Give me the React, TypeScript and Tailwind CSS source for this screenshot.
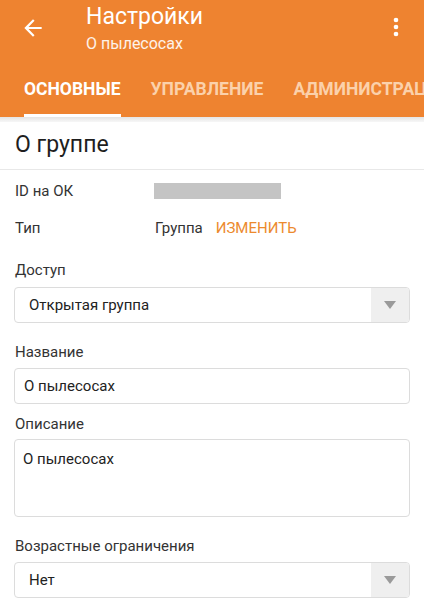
const tabs = ['Основные', 'Управление', 'Администрация'];

function Caret() {
    return (
        <svg width="12" height="8" viewBox="0 0 12 8" className="text-[#9a9a9a]">
            <path d="M0 0h12L6 8z" fill="currentColor" />
        </svg>
    );
}

function Select({ value }: { value: string }) {
    return (
        <div className="flex h-[36px] mx-[14px] rounded-[4px] border border-[#dcdcdc] bg-white overflow-hidden">
            <div className="flex-1 flex items-center pl-[14px] text-[15px] text-[#222]">{value}</div>
            <div className="w-[38px] flex items-center justify-center bg-[#efefef]">
                <Caret />
            </div>
        </div>
    );
}

function Label({ children, className = '' }: { children: React.ReactNode; className?: string }) {
    return <div className={`h-[20px] px-[15px] text-[15px] leading-[20px] text-[#333] ${className}`}>{children}</div>;
}

export default function App() {
    return (
        <div className="w-[424px] h-[612px] overflow-hidden bg-white" style={{ fontFamily: 'Roboto, "Noto Sans", sans-serif' }}>
            <header className="bg-[#ee8330] h-[117px] flex flex-col">
                <div className="h-[66px] flex">
                    <div className="w-[86px] flex items-start pt-[15px] pl-[20px]">
                        <svg width="26" height="26" viewBox="0 0 24 24" fill="#fff">
                            <path d="M20 11H7.83l5.59-5.59L12 4l-8 8 8 8 1.41-1.41L7.83 13H20v-2z" />
                        </svg>
                    </div>
                    <div className="flex-1 pt-[3px] text-white">
                        <div className="text-[23px] leading-[28px]">Настройки</div>
                        <div className="text-[16px] leading-[20px] mt-[3px] text-white/90">О пылесосах</div>
                    </div>
                    <div className="w-[56px] flex justify-center pt-[13px]">
                        <svg width="28" height="28" viewBox="0 0 24 24" fill="#fff">
                            <circle cx="12" cy="6" r="2" />
                            <circle cx="12" cy="12" r="2" />
                            <circle cx="12" cy="18" r="2" />
                        </svg>
                    </div>
                </div>
                <nav className="h-[51px] flex pl-[9px] whitespace-nowrap overflow-hidden">
                    {tabs.map((t, i) => (
                        <div
                            key={t}
                            className={`px-[15px] flex flex-col justify-between ${i === 0 ? 'text-white' : 'text-[#fbd1ab]'}`}
                        >
                            <div className="pt-[12px] text-[17.5px] leading-[22px] font-bold uppercase">{t}</div>
                            <div className={`h-[3px] ${i === 0 ? 'bg-white' : 'bg-transparent'}`} />
                        </div>
                    ))}
                </nav>
            </header>

            <div className="h-[5px] bg-gradient-to-b from-[#e4e4e4] to-[#f7f7f7]" />

            <section className="bg-white border-b border-[#e8e8e8] h-[48px] flex items-center px-[15px]">
                <h1 className="text-[23px] text-[#1e1e1e]">О группе</h1>
            </section>

            <div className="flex flex-col pb-4">
                <div className="mt-[11px] flex items-center h-[20px]">
                    <div className="w-[154px] pl-[15px] text-[15px] text-[#333]">ID на ОК</div>
                    <div className="w-[127px] h-[16px] bg-[#c4c4c4]" />
                </div>
                <div className="mt-[17px] flex items-center h-[20px]">
                    <div className="w-[155px] pl-[15px] text-[15px] text-[#333]">Тип</div>
                    <div className="text-[15px] text-[#333]">Группа</div>
                    <div className="ml-[13px] text-[15px] text-[#ec8a2e]">ИЗМЕНИТЬ</div>
                </div>

                <Label className="mt-[22px]">Доступ</Label>
                <div className="mt-[7px]">
                    <Select value="Открытая группа" />
                </div>

                <Label className="mt-[19px]">Название</Label>
                <div className="mt-[6px] mx-[14px] h-[36px] rounded-[4px] border border-[#dcdcdc] flex items-center pl-[9px] text-[15px] text-[#222]">
                    О пылесосах
                </div>

                <Label className="mt-[10px]">Описание</Label>
                <div className="mt-[5px] mx-[14px] h-[78px] rounded-[4px] border border-[#dcdcdc] pl-[8px] pt-[9px] text-[15px] leading-[20px] text-[#222]">
                    О пылесосах
                </div>

                <Label className="mt-[19px]">Возрастные ограничения</Label>
                <div className="mt-[6px]">
                    <Select value="Нет" />
                </div>
            </div>
        </div>
    );
}
